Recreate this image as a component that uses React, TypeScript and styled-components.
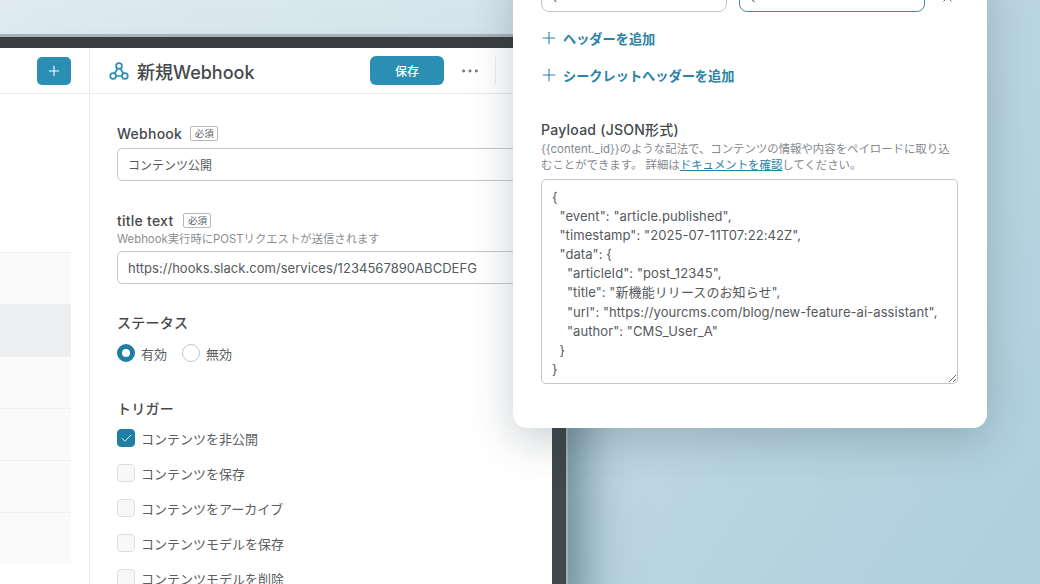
import React from "react";
import styled, { createGlobalStyle } from "styled-components";
import { Plus, X, Check, Ellipsis } from "lucide-react";

const FONT = `"Inter", "Noto Sans CJK JP", sans-serif`;

const Global = createGlobalStyle`
  html, body { margin: 0; padding: 0; }
  body { font-family: ${FONT}; color: #44484b; }
  * { box-sizing: border-box; }
`;

const Page = styled.div`
  position: relative;
  width: 1040px;
  height: 584px;
  overflow: hidden;
  padding-top: 34px;
  background: linear-gradient(125deg, #dfebf0 0%, #d3e4ec 40%, #b9d5e1 72%, #aecfdc 100%);
`;

const AppFrame = styled.div`
  width: 568px;
  height: 560px;
  border-top: 3px solid #a6b2b7;
  border-right: 2px solid #9fb0b6;
  box-shadow: 22px 36px 46px -8px rgba(20, 60, 75, 0.55);
`;

const AppBody = styled.div`
  height: 100%;
  display: grid;
  grid-template-columns: 90px 1fr;
  grid-template-rows: 46px 1fr;
  background: #fff;
  border-top: 11px solid #3a3e3f;
  border-right: 14px solid #3f474a;
`;

const SideHead = styled.div`
  display: flex;
  align-items: center;
  justify-content: flex-end;
  padding-right: 18px;
  border-right: 1px solid #e8eaeb;
  border-bottom: 1px solid #e8eaeb;
`;

const AddButton = styled.div`
  width: 34px;
  height: 28px;
  display: flex;
  align-items: center;
  justify-content: center;
  border-radius: 5px;
  background: #2a8fb3;
  color: #fff;
`;

const MainHead = styled.div`
  display: flex;
  align-items: center;
  padding-left: 19px;
  border-bottom: 1px solid #e8eaeb;
  color: #2a8fb3;
`;

const Title = styled.h1`
  margin: 0 0 0 8px;
  width: 233px;
  font-size: 18px;
  font-weight: 500;
  color: #45494c;
  white-space: nowrap;
`;

const SaveButton = styled.div`
  width: 74px;
  height: 29px;
  display: flex;
  align-items: center;
  justify-content: center;
  border-radius: 6px;
  background: #2a8fb3;
  color: #fff;
  font-size: 12px;
  font-weight: 500;
`;

const More = styled.div`
  width: 51px;
  display: flex;
  justify-content: center;
  color: #6a6e71;
`;

const Divider = styled.div`
  width: 1px;
  height: 28px;
  background: #eceeef;
`;

const Sidebar = styled.div`
  padding: 158px 18px 0 0;
  border-right: 1px solid #e8eaeb;
  overflow: hidden;
`;

const SideRow = styled.div<{ $active?: boolean }>`
  height: 52px;
  border-top: 1px solid #eef0f1;
  background: ${(p) => (p.$active ? "#eceeef" : "#fafafa")};
`;

const Form = styled.div`
  padding: 31px 0 0 27px;
  overflow: hidden;
`;

const Section = styled.div<{ $gap: number }>`
  margin-bottom: ${(p) => p.$gap}px;
`;

const LabelRow = styled.div<{ $gap?: number }>`
  display: flex;
  align-items: center;
  gap: ${(p) => p.$gap ?? 7}px;
  height: 16px;
`;

const Label = styled.span`
  font-size: 14px;
  font-weight: 500;
  letter-spacing: 0.25px;
  color: #45494c;
  white-space: nowrap;
`;

const Badge = styled.span`
  display: inline-flex;
  align-items: center;
  justify-content: center;
  width: 28px;
  height: 15px;
  border: 1px solid #b4b8ba;
  border-radius: 2px;
  font-size: 9.5px;
  color: #5a5e61;
`;

const Hint = styled.div`
  margin-top: 3px;
  font-size: 11.35px;
  line-height: 16px;
  color: #8a8e91;
  white-space: nowrap;
`;

const TextInput = styled.input<{ $size?: number; $width?: number; $focus?: boolean; $top?: number }>`
  display: block;
  width: ${(p) => p.$width ?? 440}px;
  height: 33px;
  margin-top: ${(p) => p.$top ?? 0}px;
  padding: 0 10px;
  border: 1px solid ${(p) => (p.$focus ? "#3f8ca8" : "#c4c7c9")};
  border-radius: ${(p) => (p.$width ? 8 : 5)}px;
  background: #fff;
  font-family: ${FONT};
  font-size: ${(p) => p.$size ?? 12}px;
  letter-spacing: ${(p) => (p.$size ? 0.04 : 0)}px;
  color: #55595c;
  outline: none;
`;

const RadioRow = styled.div`
  display: flex;
  align-items: center;
  margin-top: 14px;
  height: 18px;
`;

const RadioMark = styled.span<{ $on?: boolean }>`
  width: 18px;
  height: 18px;
  border-radius: 50%;
  background: #fff;
  border: ${(p) => (p.$on ? "5px solid #1f7fa3" : "1px solid #c4c7c9")};
`;

const OptionText = styled.span<{ $end?: number }>`
  margin: 0 ${(p) => p.$end ?? 0}px 0 6px;
  font-size: 13px;
  color: #5a5e61;
  white-space: nowrap;
`;

const CheckList = styled.div`
  display: flex;
  flex-direction: column;
  gap: 17px;
  margin-top: 13px;
`;

const CheckRow = styled.div`
  display: flex;
  align-items: center;
  height: 18px;
`;

const CheckMark = styled.span<{ $on?: boolean }>`
  width: 18px;
  height: 18px;
  display: flex;
  align-items: center;
  justify-content: center;
  border-radius: 4px;
  color: #fff;
  background: ${(p) => (p.$on ? "#1f7fa3" : "#f8f8f8")};
  border: 1px solid ${(p) => (p.$on ? "#1f7fa3" : "#dcdedf")};
`;

const Modal = styled.div`
  position: absolute;
  left: 513px;
  top: -41px;
  width: 474px;
  height: 469px;
  padding: 20px 28px 0;
  background: #fff;
  border-radius: 14px;
  box-shadow: 0 12px 44px rgba(35, 55, 65, 0.24);
`;

const HeaderInputs = styled.div`
  display: flex;
  align-items: center;
  gap: 12px;
  height: 33px;
`;

const RemoveIcon = styled.span`
  display: flex;
  margin: 4px 0 0 3px;
  color: #6c7073;
`;

const AddLink = styled.div<{ $top: number }>`
  display: flex;
  align-items: center;
  gap: 4px;
  height: 18px;
  margin-top: ${(p) => p.$top}px;
  margin-left: -2px;
  font-size: 13.2px;
  font-weight: 600;
  color: #2a84a6;
`;

const PayloadLabel = styled(Label)`
  display: block;
  margin-top: 37px;
  line-height: 18px;
`;

const PayloadHint = styled.p`
  margin: 2px 0 6px;
  width: 414px;
  font-size: 11.4px;
  line-height: 16px;
  color: #85898c;

  a {
    color: #2a84a6;
    text-decoration: underline;
  }
`;

const Payload = styled.textarea`
  display: block;
  width: 417px;
  height: 205px;
  padding: 8px 10px;
  border: 1px solid #c4c7c9;
  border-radius: 5px;
  font-family: ${FONT};
  font-size: 13px;
  letter-spacing: 0.08px;
  line-height: 19.1px;
  color: #55595c;
  outline: none;
  overflow: hidden;
  white-space: pre;
`;

const PAYLOAD = `{
  "event": "article.published",
  "timestamp": "2025-07-11T07:22:42Z",
  "data": {
    "articleId": "post_12345",
    "title": "新機能リリースのお知らせ",
    "url": "https://yourcms.com/blog/new-feature-ai-assistant",
    "author": "CMS_User_A"
  }
}`;

const triggers = ["コンテンツを非公開", "コンテンツを保存", "コンテンツをアーカイブ", "コンテンツモデルを保存", "コンテンツモデルを削除"];
const rows = [false, true, false, false, false, false];

const WebhookMark = () => (
  <svg width="20" height="20" viewBox="0 0 24 24" fill="none" stroke="currentColor" strokeWidth="2" strokeLinecap="round">
    <circle cx="12" cy="6" r="3.5" />
    <circle cx="5" cy="18" r="3.5" />
    <circle cx="19" cy="18" r="3.5" />
    <path d="M10.2 9 6.8 15M13.8 9l3.4 6M8.5 18h7" />
  </svg>
);

export default function App() {
  return (
    <Page>
      <Global />
      <AppFrame>
        <AppBody>
          <SideHead>
            <AddButton><Plus size={16} strokeWidth={1.6} /></AddButton>
          </SideHead>
          <MainHead>
            <WebhookMark />
            <Title>新規Webhook</Title>
            <SaveButton>保存</SaveButton>
            <More><Ellipsis size={22} strokeWidth={1.2} /></More>
            <Divider />
          </MainHead>
          <Sidebar>
            {rows.map((active, i) => <SideRow key={i} $active={active} />)}
          </Sidebar>
          <Form>
            <Section $gap={31}>
              <LabelRow $gap={8}><Label>Webhook</Label><Badge>必須</Badge></LabelRow>
              <TextInput $top={7} readOnly value="コンテンツ公開" />
            </Section>
            <Section $gap={30}>
              <LabelRow $gap={10}><Label>title text</Label><Badge>必須</Badge></LabelRow>
              <Hint>Webhook実行時にPOSTリクエストが送信されます</Hint>
              <TextInput $top={4} $size={13} readOnly value="https://hooks.slack.com/services/1234567890ABCDEFG" />
            </Section>
            <Section $gap={38}>
              <LabelRow><Label>ステータス</Label></LabelRow>
              <RadioRow>
                <RadioMark $on />
                <OptionText $end={15}>有効</OptionText>
                <RadioMark />
                <OptionText>無効</OptionText>
              </RadioRow>
            </Section>
            <Section $gap={0}>
              <LabelRow><Label>トリガー</Label></LabelRow>
              <CheckList>
                {triggers.map((t, i) => (
                  <CheckRow key={t}>
                    <CheckMark $on={i === 0}>{i === 0 && <Check size={13} strokeWidth={1.6} />}</CheckMark>
                    <OptionText>{t}</OptionText>
                  </CheckRow>
                ))}
              </CheckList>
            </Section>
          </Form>
        </AppBody>
      </AppFrame>
      <Modal>
        <HeaderInputs>
          <TextInput $width={186} readOnly value="{" />
          <TextInput $width={186} $focus readOnly value="{" />
          <RemoveIcon><X size={15} strokeWidth={1.6} /></RemoveIcon>
        </HeaderInputs>
        <AddLink $top={17}><Plus size={20} strokeWidth={1.3} />ヘッダーを追加</AddLink>
        <AddLink $top={19}><Plus size={20} strokeWidth={1.3} />シークレットヘッダーを追加</AddLink>
        <PayloadLabel>Payload (JSON形式)</PayloadLabel>
        <PayloadHint>
          {"{{content._id}}"}のような記法で、コンテンツの情報や内容をペイロードに取り込むことができます。 詳細は<a href="#docs">ドキュメントを確認</a>してください。
        </PayloadHint>
        <Payload readOnly value={PAYLOAD} />
      </Modal>
    </Page>
  );
}
